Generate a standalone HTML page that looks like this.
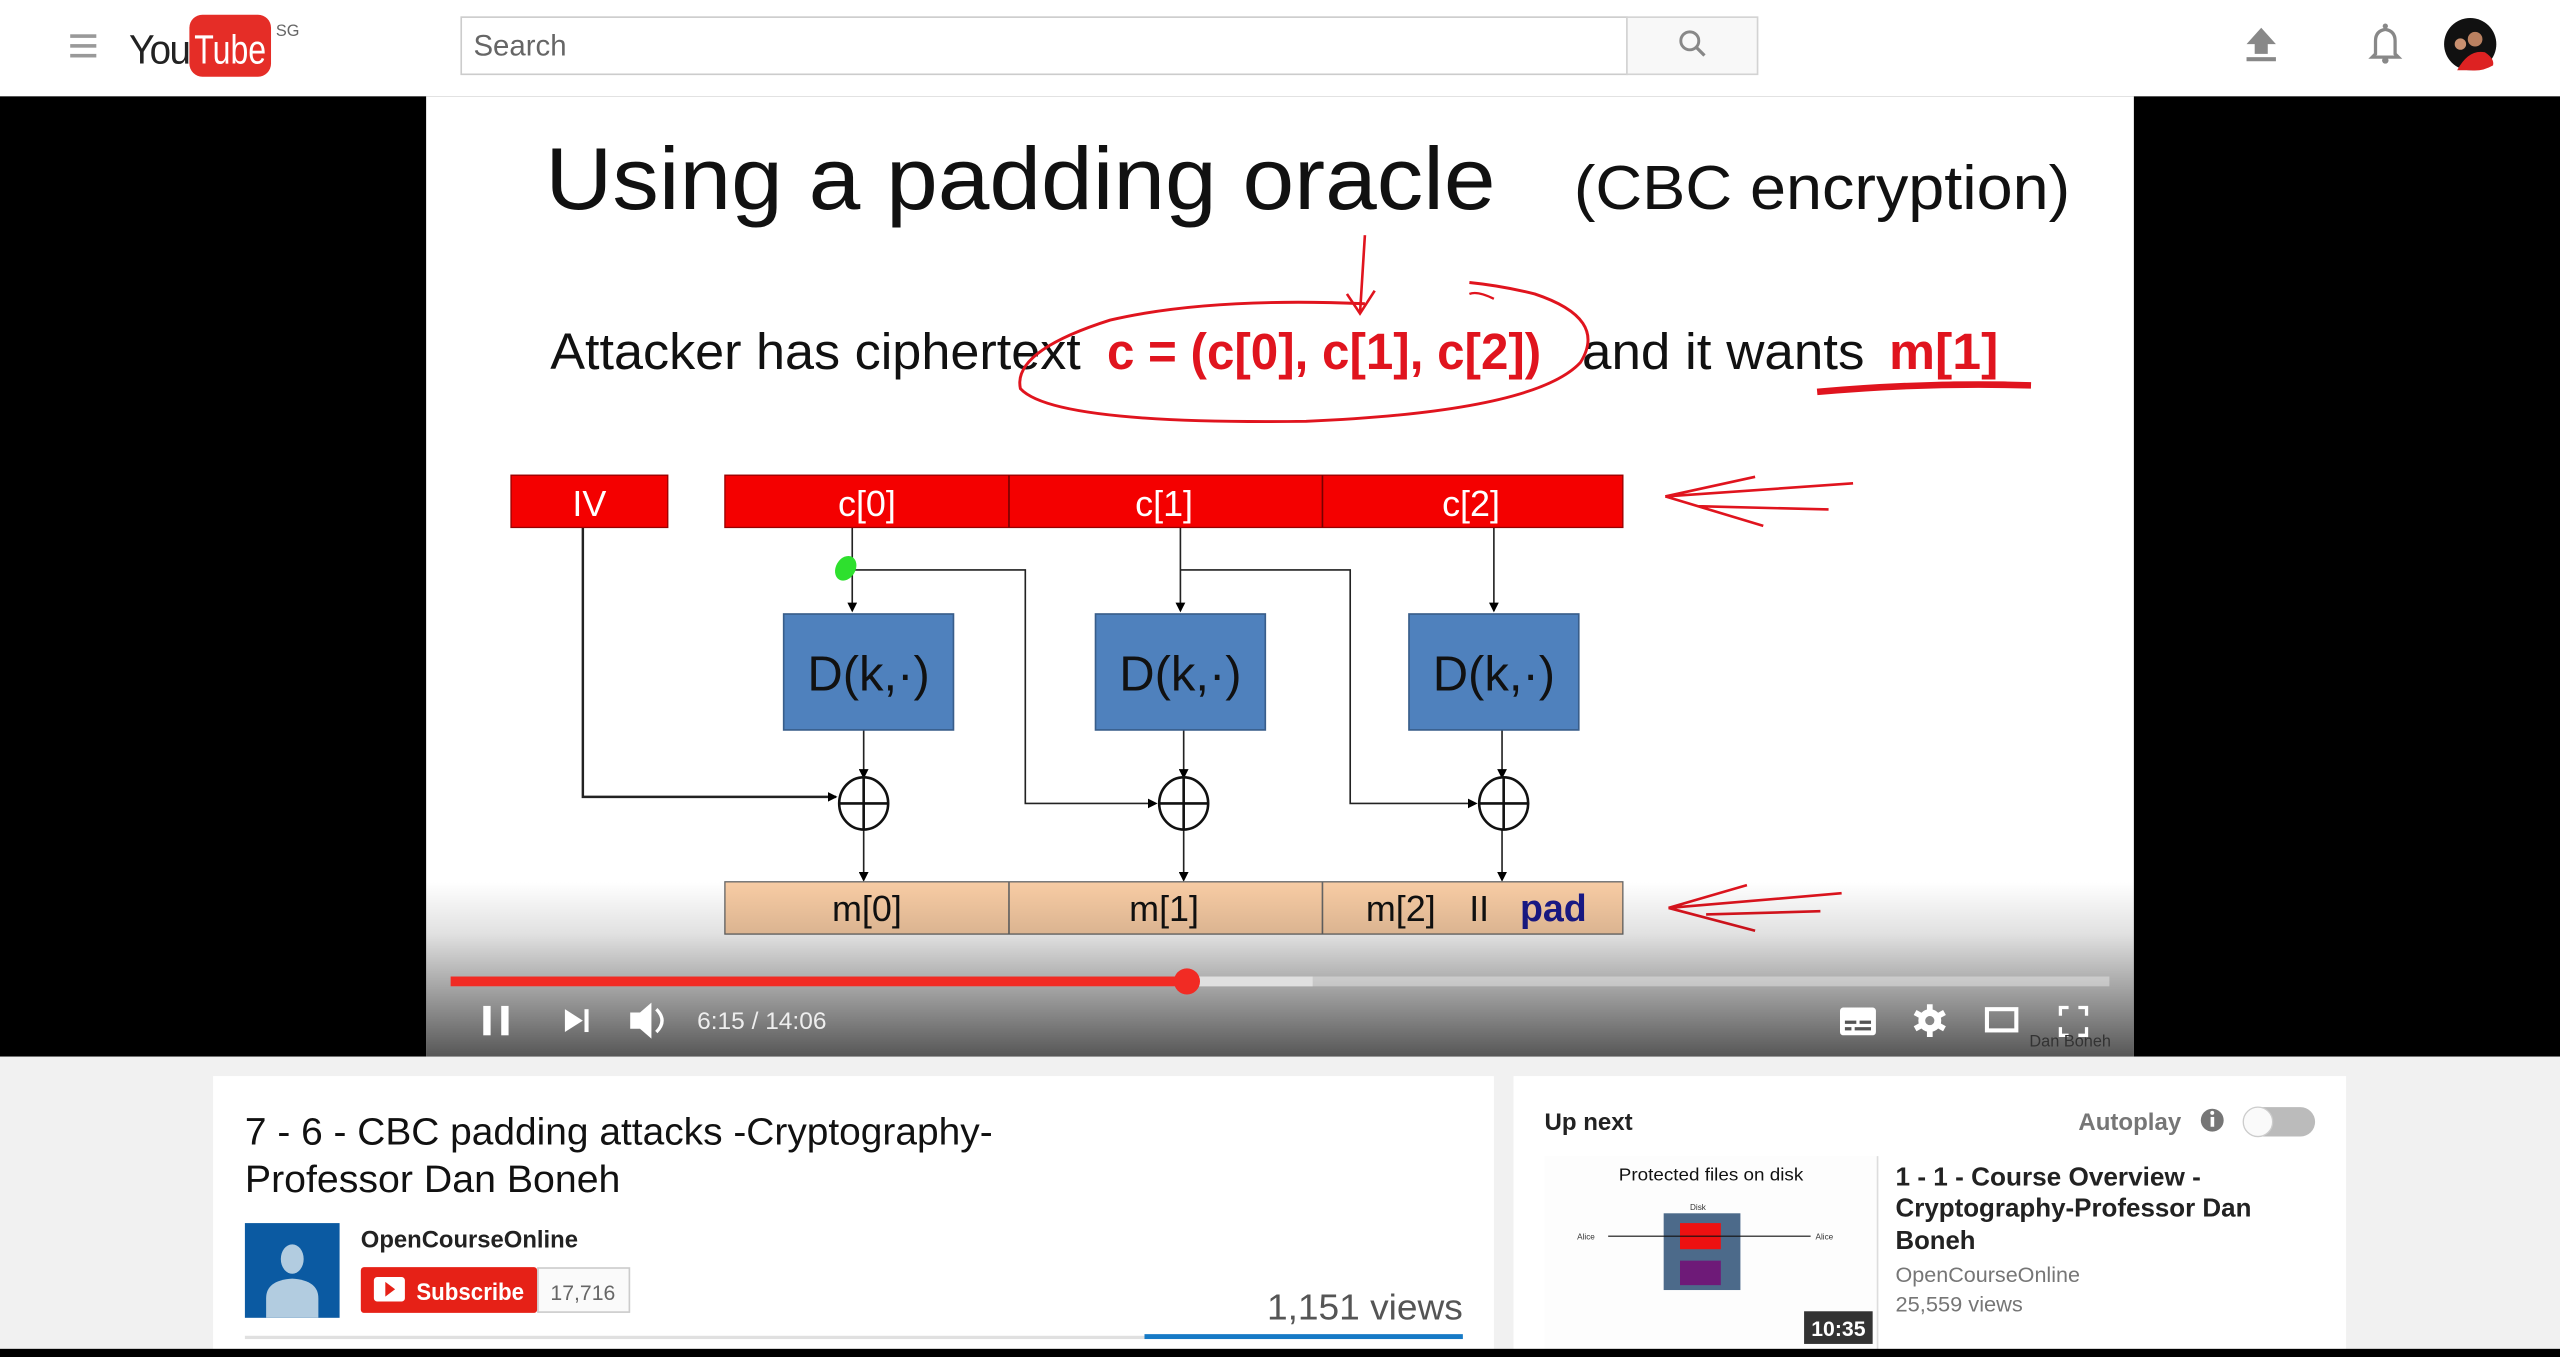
<!DOCTYPE html>
<html><head><meta charset="utf-8"><style>
html,body{margin:0;padding:0;width:2560px;height:1357px;overflow:hidden;background:#f1f1f1}
svg{display:block}
text{font-family:"Liberation Sans",sans-serif}
</style></head><body>
<svg width="2560" height="1357" viewBox="0 0 1568 831" preserveAspectRatio="none" xmlns="http://www.w3.org/2000/svg">
<defs>
<linearGradient id="g" x1="0" y1="0" x2="0" y2="1">
<stop offset="0" stop-color="#000" stop-opacity="0"/>
<stop offset="0.3" stop-color="#000" stop-opacity="0.12"/>
<stop offset="1" stop-color="#000" stop-opacity="0.66"/>
</linearGradient>
<marker id="ar" markerWidth="6" markerHeight="6" refX="5" refY="3" orient="auto" markerUnits="userSpaceOnUse"><path d="M0,0 L6,3 L0,6 z" fill="#000"/></marker>
</defs>
<!-- header -->
<rect x="0" y="0" width="1568" height="59" fill="#fff"/>
<rect x="43" y="21" width="16" height="2.2" fill="#999"/>
<rect x="43" y="27" width="16" height="2.2" fill="#999"/>
<rect x="43" y="33" width="16" height="2.2" fill="#999"/>
<text x="79" y="39" font-size="25" fill="#222" textLength="37" lengthAdjust="spacingAndGlyphs" letter-spacing="-1">You</text>
<rect x="116" y="9" width="50" height="38" rx="8" fill="#e52d27"/>
<text x="119" y="39" font-size="25" fill="#fff" textLength="44" lengthAdjust="spacingAndGlyphs">Tube</text>
<text x="169" y="22" font-size="10" fill="#666">SG</text>
<rect x="282.5" y="10.5" width="714" height="35" fill="#fff" stroke="#ccc"/>
<rect x="996.5" y="10.5" width="80" height="35" fill="#f8f8f8" stroke="#d3d3d3"/>
<text x="290" y="34" font-size="18" fill="#666">Search</text>
<circle cx="1035" cy="25" r="5.5" fill="none" stroke="#888" stroke-width="1.8"/>
<line x1="1039" y1="29" x2="1044" y2="34" stroke="#888" stroke-width="2"/>
<path d="M1385,17 L1394,27 L1389,27 L1389,33 L1381,33 L1381,27 L1376,27 Z" fill="#888"/>
<rect x="1376" y="35" width="18" height="2.5" fill="#888"/>
<path d="M1453,35 L1455,33 L1455,25 Q1455,19 1461,18 Q1467,19 1467,25 L1467,33 L1469,35 Z" fill="none" stroke="#888" stroke-width="2"/>
<circle cx="1461" cy="16" r="1.6" fill="#888"/><circle cx="1461" cy="37" r="2" fill="#888"/>
<circle cx="1513" cy="27" r="16" fill="#111"/>
<path d="M1505,43 Q1512,30 1522,32 Q1528,36 1527,40 Q1520,44 1513,43 Z" fill="#d22"/>
<circle cx="1516" cy="24" r="4.5" fill="#b98060"/><circle cx="1507" cy="27" r="3.5" fill="#c99070"/>
<!-- video -->
<rect x="0" y="59" width="1568" height="588" fill="#000"/>
<rect x="261" y="59" width="1046" height="588" fill="#fff"/>
<text x="334" y="128" font-size="54" fill="#111" textLength="582" lengthAdjust="spacingAndGlyphs">Using a padding oracle</text>
<text x="964" y="128" font-size="38" fill="#111" textLength="304" lengthAdjust="spacingAndGlyphs">(CBC encryption)</text>
<text x="337" y="226" font-size="31" fill="#111" textLength="325" lengthAdjust="spacingAndGlyphs">Attacker has ciphertext</text>
<text x="678" y="226" font-size="31" font-weight="bold" fill="#e0141e" textLength="266" lengthAdjust="spacingAndGlyphs">c = (c[0], c[1], c[2])</text>
<text x="969" y="226" font-size="31" fill="#111" textLength="173" lengthAdjust="spacingAndGlyphs">and it wants</text>
<text x="1157" y="226" font-size="31" font-weight="bold" fill="#e0141e" textLength="67" lengthAdjust="spacingAndGlyphs">m[1]</text>
<path d="M836,186 Q740,182 680,196 Q620,215 625,238 Q645,260 800,258 Q940,252 968,222 Q985,195 940,180 Q920,175 900,173" fill="none" stroke="#e0141e" stroke-width="1.8"/>
<path d="M900,180 Q905,178 915,183" fill="none" stroke="#e0141e" stroke-width="1.4"/>
<path d="M836,144 L833,192 M825,180 L833,192 L842,178" fill="none" stroke="#e0141e" stroke-width="1.6"/>
<path d="M1113,240 Q1180,234 1244,236" fill="none" stroke="#e0141e" stroke-width="4"/>
<path d="M1135,296 L1020,304 L1075,292 M1020,304 L1080,322 M1040,310 L1120,312" fill="none" stroke="#e0141e" stroke-width="1.6"/>
<path d="M1128,547 L1022,556 L1070,542 M1022,556 L1075,570 M1045,560 L1115,558" fill="none" stroke="#e0141e" stroke-width="1.6"/>
<!-- diagram -->
<g stroke="#222" stroke-width="1" fill="none">
<line x1="522" y1="323" x2="522" y2="374" marker-end="url(#ar)"/>
<line x1="723" y1="323" x2="723" y2="374" marker-end="url(#ar)"/>
<line x1="915" y1="323" x2="915" y2="374" marker-end="url(#ar)"/>
<polyline points="522,349 628,349 628,492 708,492" marker-end="url(#ar)"/>
<polyline points="723,349 827,349 827,492 904,492" marker-end="url(#ar)"/>
<polyline points="357,323 357,488 512,488" stroke-width="1.5" marker-end="url(#ar)"/>
<line x1="529" y1="447" x2="529" y2="476" marker-end="url(#ar)"/>
<line x1="725" y1="447" x2="725" y2="476" marker-end="url(#ar)"/>
<line x1="920" y1="447" x2="920" y2="476" marker-end="url(#ar)"/>
<line x1="529" y1="508" x2="529" y2="539" marker-end="url(#ar)"/>
<line x1="725" y1="508" x2="725" y2="539" marker-end="url(#ar)"/>
<line x1="920" y1="508" x2="920" y2="539" marker-end="url(#ar)"/>
</g>
<ellipse cx="518" cy="348" rx="6" ry="8" fill="#2ee02e" transform="rotate(30 518 348)"/>
<g stroke="#111" stroke-width="1.6" fill="#fff">
<ellipse cx="529" cy="492" rx="15" ry="16"/><ellipse cx="725" cy="492" rx="15" ry="16"/><ellipse cx="921" cy="492" rx="15" ry="16"/>
<path d="M514,492 H544 M529,476 V508 M710,492 H740 M725,476 V508 M906,492 H936 M921,476 V508" fill="none"/>
</g>
<rect x="313" y="291" width="96" height="32" fill="#f40000" stroke="#900" stroke-width="0.8"/>
<rect x="444" y="291" width="550" height="32" fill="#f40000" stroke="#900" stroke-width="0.8"/>
<line x1="618" y1="291" x2="618" y2="323" stroke="#700"/><line x1="810" y1="291" x2="810" y2="323" stroke="#700"/>
<g font-size="22" fill="#fff" text-anchor="middle"><text x="361" y="316">IV</text><text x="531" y="316">c[0]</text><text x="713" y="316">c[1]</text><text x="901" y="316">c[2]</text></g>
<g fill="#4f81bd" stroke="#385d8a"><rect x="480" y="376" width="104" height="71"/><rect x="671" y="376" width="104" height="71"/><rect x="863" y="376" width="104" height="71"/></g>
<g font-size="30" fill="#111" text-anchor="middle"><text x="532" y="423">D(k,·)</text><text x="723" y="423">D(k,·)</text><text x="915" y="423">D(k,·)</text></g>
<rect x="444" y="540" width="550" height="32" fill="#f8cca4" stroke="#666" stroke-width="0.8"/>
<line x1="618" y1="540" x2="618" y2="572" stroke="#666"/><line x1="810" y1="540" x2="810" y2="572" stroke="#666"/>
<g font-size="22" fill="#111" text-anchor="middle"><text x="531" y="564">m[0]</text><text x="713" y="564">m[1]</text><text x="858" y="564">m[2]</text><text x="906" y="564">II</text></g>
<text x="931" y="564" font-size="23" font-weight="bold" fill="#1a1a8a">pad</text>
<!-- controls -->
<rect x="261" y="540" width="1046" height="107" fill="url(#g)"/>
<rect x="276" y="598" width="1016" height="6" fill="#fff" fill-opacity="0.35"/>
<rect x="727" y="598" width="77" height="6" fill="#e0e0e0"/>
<rect x="276" y="598" width="451" height="6" fill="#f12b24"/>
<circle cx="727" cy="601" r="8" fill="#f12b24"/>
<g fill="#fff">
<rect x="296" y="616" width="4.5" height="18"/><rect x="307" y="616" width="4.5" height="18"/>
<path d="M346,618 L357,625 L346,632 Z"/><rect x="358" y="618" width="2.5" height="14"/>
<path d="M386,620 L392,620 L399,614 L399,636 L392,630 L386,630 Z"/>
<path d="M402,618 Q409,625 402,632" fill="none" stroke="#fff" stroke-width="2"/>
<text x="427" y="630" font-size="15" fill="#eee">6:15 / 14:06</text>
<rect x="1127" y="617" width="22" height="17" rx="2"/>
<circle cx="1182" cy="625" r="7"/>
<g stroke="#fff" stroke-width="3.5"><line x1="1182" y1="615" x2="1182" y2="635"/><line x1="1173" y1="620" x2="1191" y2="630"/><line x1="1173" y1="630" x2="1191" y2="620"/></g>
<rect x="1217" y="618" width="18" height="13" fill="none" stroke="#fff" stroke-width="2.5"/>
<path d="M1262,622 V617 H1267 M1273,617 H1278 V622 M1278,629 V634 H1273 M1267,634 H1262 V629" fill="none" stroke="#fff" stroke-width="2"/>
</g>
<g fill="#555"><rect x="1130" y="625" width="7" height="2"/><rect x="1139" y="625" width="7" height="2"/><rect x="1130" y="629" width="4" height="2"/><rect x="1136" y="629" width="10" height="2"/></g>
<circle cx="1182" cy="625" r="2.8" fill="#888"/>
<text x="1243" y="641" font-size="10" fill="#333">Dan Boneh</text>
<!-- left card -->
<rect x="130.5" y="659" width="784.5" height="170" fill="#fff"/>
<text x="150" y="701" font-size="23" fill="#111" textLength="458" lengthAdjust="spacingAndGlyphs">7 - 6 - CBC padding attacks -Cryptography-</text>
<text x="150" y="730" font-size="23" fill="#111" textLength="230" lengthAdjust="spacingAndGlyphs">Professor Dan Boneh</text>
<rect x="150" y="749" width="58" height="58" fill="#0b5aa2"/>
<ellipse cx="179" cy="771" rx="7" ry="9" fill="#b2cce0"/>
<path d="M163,807 L163,795 Q163,784 179,783 Q195,784 195,795 L195,807 Z" fill="#b2cce0"/>
<text x="221" y="764" font-size="15" font-weight="bold" fill="#222" textLength="133" lengthAdjust="spacingAndGlyphs">OpenCourseOnline</text>
<rect x="221" y="776" width="108" height="28" rx="2" fill="#e62117"/>
<rect x="229" y="782" width="19" height="15" rx="2" fill="#fff"/>
<path d="M236,785 L242,789.5 L236,794 Z" fill="#e62117"/>
<text x="255" y="796" font-size="15" font-weight="bold" fill="#fff" textLength="66" lengthAdjust="spacingAndGlyphs">Subscribe</text>
<rect x="329.5" y="776.5" width="56" height="27" fill="#fafafa" stroke="#ccc"/>
<text x="357" y="796" font-size="13" fill="#666" text-anchor="middle">17,716</text>
<text x="896" y="808" font-size="22" fill="#555" text-anchor="end" textLength="120" lengthAdjust="spacingAndGlyphs">1,151 views</text>
<rect x="150" y="818" width="746" height="2" fill="#e0e0e0"/>
<rect x="701" y="817" width="195" height="3" fill="#167ac6"/>
<!-- right card -->
<rect x="927" y="659" width="510" height="170" fill="#fff"/>
<text x="946" y="692" font-size="15" font-weight="bold" fill="#222" textLength="54" lengthAdjust="spacingAndGlyphs">Up next</text>
<text x="1336" y="692" font-size="15" font-weight="bold" fill="#767676" text-anchor="end" textLength="63" lengthAdjust="spacingAndGlyphs">Autoplay</text>
<circle cx="1355" cy="686" r="7" fill="#767676"/><rect x="1354" y="684" width="2.2" height="6" fill="#fff"/><circle cx="1355" cy="681.5" r="1.2" fill="#fff"/>
<rect x="1374" y="678" width="44" height="18" rx="9" fill="#bbb"/>
<circle cx="1383" cy="687" r="9" fill="#fafafa" stroke="#ccc" stroke-width="0.8"/>
<rect x="946" y="708" width="204" height="121" fill="#fdfdfd"/>
<line x1="1150" y1="708" x2="1150" y2="829" stroke="#ddd"/>
<text x="1048" y="723" font-size="11" fill="#111" text-anchor="middle" textLength="113" lengthAdjust="spacingAndGlyphs">Protected files on disk</text>
<text x="1040" y="741" font-size="5" fill="#333" text-anchor="middle">Disk</text>
<rect x="1019" y="743" width="47" height="47" fill="#4c6a8a"/>
<rect x="1029" y="749" width="25" height="16" fill="#ee1111"/>
<rect x="1029" y="772" width="25" height="15" fill="#6e1a78"/>
<line x1="985" y1="757" x2="1109" y2="757" stroke="#111" stroke-width="0.7"/>
<text x="966" y="759" font-size="5" fill="#333">Alice</text><text x="1112" y="759" font-size="5" fill="#333">Alice</text>
<rect x="1105" y="803" width="42" height="20" fill="#333"/>
<text x="1126" y="818" font-size="13" font-weight="bold" fill="#fff" text-anchor="middle">10:35</text>
<text x="1161" y="726" font-size="16" font-weight="bold" fill="#222" textLength="187" lengthAdjust="spacingAndGlyphs">1 - 1 - Course Overview -</text>
<text x="1161" y="745" font-size="16" font-weight="bold" fill="#222" textLength="218" lengthAdjust="spacingAndGlyphs">Cryptography-Professor Dan</text>
<text x="1161" y="765" font-size="16" font-weight="bold" fill="#222" textLength="49" lengthAdjust="spacingAndGlyphs">Boneh</text>
<text x="1161" y="785" font-size="13" fill="#767676" textLength="113" lengthAdjust="spacingAndGlyphs">OpenCourseOnline</text>
<text x="1161" y="803" font-size="13" fill="#767676" textLength="78" lengthAdjust="spacingAndGlyphs">25,559 views</text>
<rect x="0" y="826" width="1568" height="5" fill="#000"/>
</svg>
</body></html>
